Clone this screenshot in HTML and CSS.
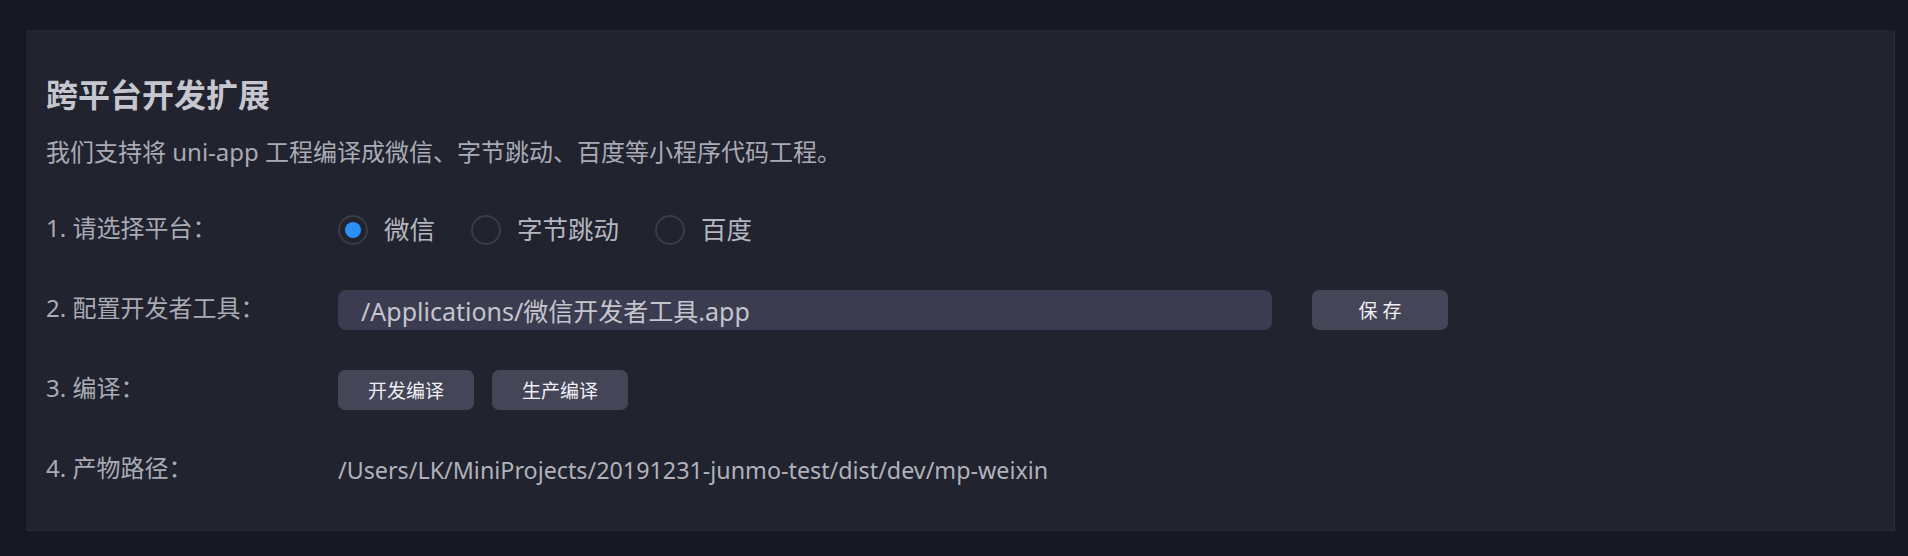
FILE: index.html
```html
<!DOCTYPE html>
<html lang="zh-CN">
<head>
  <meta charset="UTF-8">
  <meta name="viewport" content="width=device-width, initial-scale=1.0">
  <title>跨平台开发扩展</title>
  <link rel="stylesheet" href="styles.css">
</head>
<body>
  <div class="panel">
    <h2>跨平台开发扩展</h2>
    <p class="desc">我们支持将 uni-app 工程编译成微信、字节跳动、百度等小程序代码工程。</p>

    <div class="row">
      <div class="label">1. 请选择平台：</div>
      <div class="field">
        <label class="radio checked"><span class="dot"></span><span class="txt">微信</span></label>
        <label class="radio"><span class="dot"></span><span class="txt">字节跳动</span></label>
        <label class="radio"><span class="dot"></span><span class="txt">百度</span></label>
      </div>
    </div>

    <div class="row">
      <div class="label">2. 配置开发者工具：</div>
      <div class="field">
        <input type="text" class="path-input" value="/Applications/微信开发者工具.app">
        <button class="btn btn-save">保 存</button>
      </div>
    </div>

    <div class="row">
      <div class="label">3. 编译：</div>
      <div class="field">
        <button class="btn">开发编译</button>
        <button class="btn">生产编译</button>
      </div>
    </div>

    <div class="row">
      <div class="label">4. 产物路径：</div>
      <div class="field">
        <span class="out-path">/Users/LK/MiniProjects/20191231-junmo-test/dist/dev/mp-weixin</span>
      </div>
    </div>
  </div>
</body>
</html>
```

FILE: styles.css
```css
html, body {
  height: 100%;
}
body {
  margin: 0;
  padding: 30px 14px 26px 26px;
  box-sizing: border-box;
  background: #161922;
  font-family: "Noto Sans", "Noto Sans CJK SC", sans-serif;
  color: #a9abb5;
}
.panel {
  background: #21232f;
  box-shadow: 1px 1px 0 #2a2c38;
  padding: 45px 20px 40px 20px;
  box-sizing: border-box;
  height: 100%;
}
h2 {
  margin: 0;
  font-size: 32px;
  line-height: 40px;
  font-weight: 600;
  color: #c6c7ce;
}
.desc {
  margin: 19px 0 0 0;
  font-size: 24px;
  line-height: 36px;
}
.row {
  display: flex;
  align-items: center;
  height: 40px;
  margin-top: 40px;
}
.label {
  width: 292px;
  flex-shrink: 0;
  font-size: 24px;
  line-height: 36px;
  margin-top: -4px;
}
.field {
  display: flex;
  align-items: center;
}
.radio {
  display: flex;
  align-items: center;
  font-size: 25.5px;
  color: #b4b6bf;
  margin-right: 36px;
}
.radio .txt {
  margin-top: -5px;
}
.dot {
  width: 26px;
  height: 26px;
  border: 2px solid #3a3c48;
  border-radius: 50%;
  margin-right: 16px;
  display: flex;
  align-items: center;
  justify-content: center;
}
.radio.checked .dot::after {
  content: "";
  width: 16px;
  height: 16px;
  border-radius: 50%;
  background: #2c8ff6;
}
.path-input {
  width: 934px;
  height: 40px;
  box-sizing: border-box;
  border: none;
  border-radius: 8px;
  background: #3b3c4f;
  color: #c4c5ce;
  font-family: inherit;
  font-size: 25px;
  padding: 0 23px;
  outline: none;
}
.btn {
  width: 136px;
  height: 40px;
  border: none;
  border-radius: 7px;
  background: #444557;
  color: #f0f0f4;
  font-family: inherit;
  font-size: 19px;
  cursor: pointer;
  margin-right: 18px;
}
.btn-save {
  margin-left: 40px;
}
.out-path {
  font-size: 23.3px;
  color: #b0b2bb;
}
```
